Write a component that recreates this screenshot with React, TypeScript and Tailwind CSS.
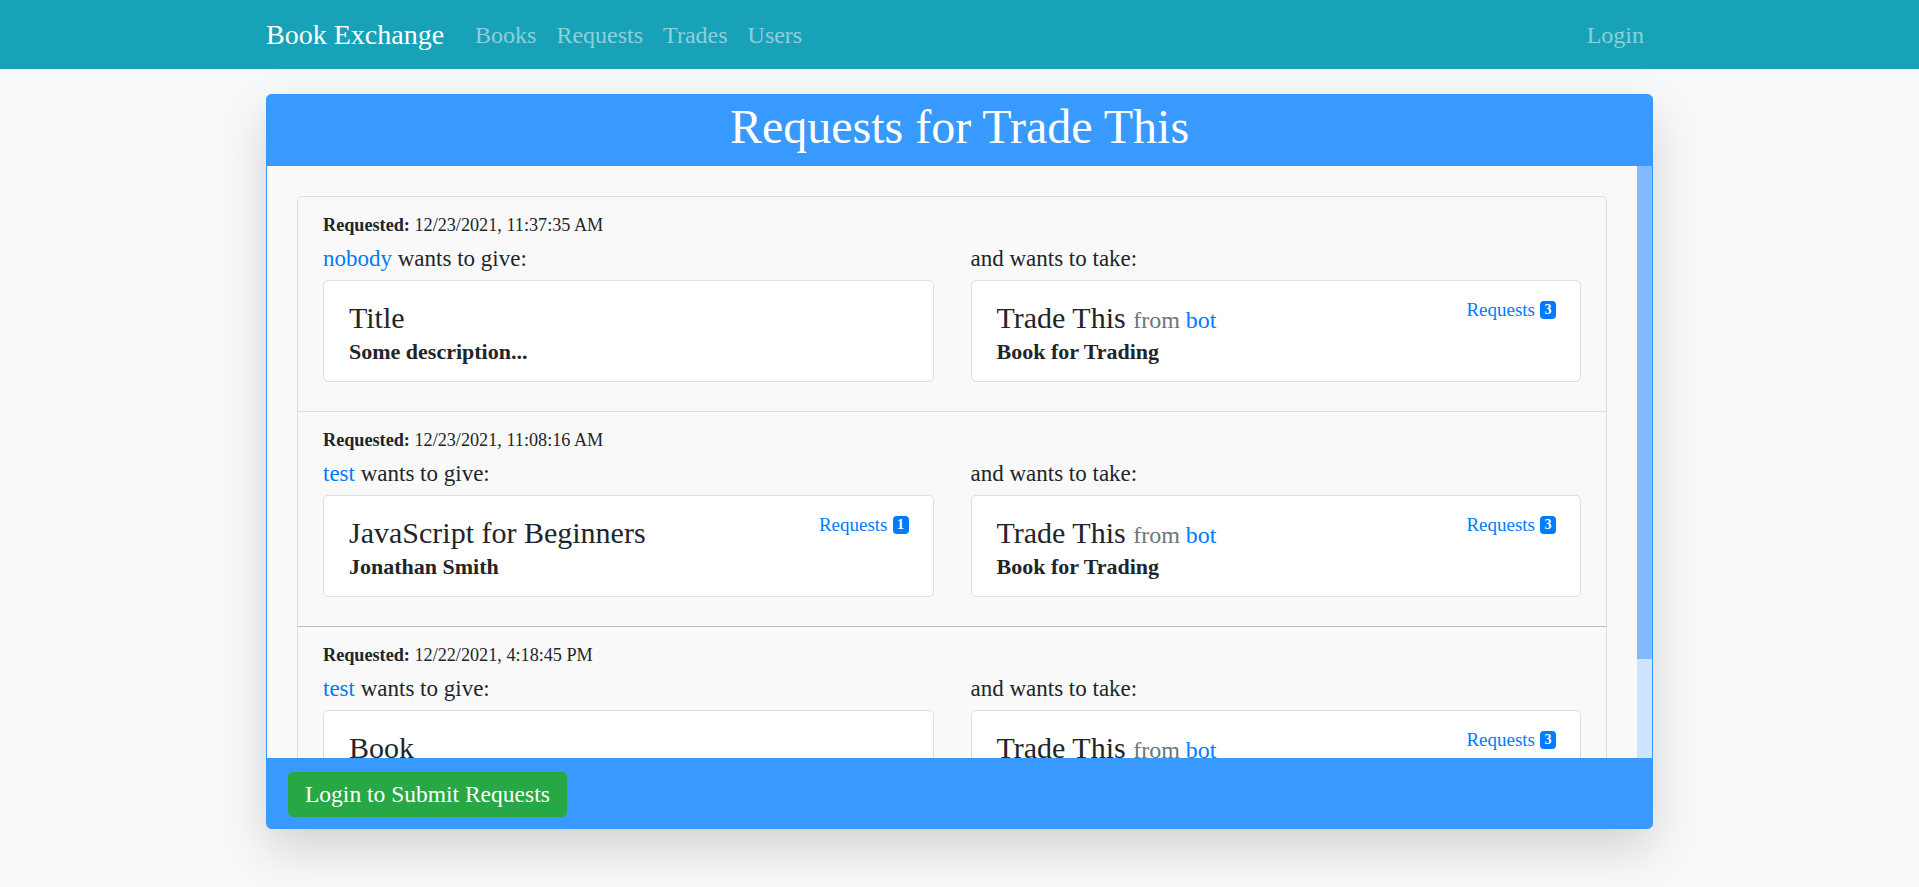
import React from "react";

type Book = {
  title: string;
  subtitle: string;
  from?: string;
  requests?: number;
};

type Req = {
  date: string;
  user: string;
  give: Book;
  take: Book;
  darkTop?: boolean;
};

const take: Book = { title: "Trade This", subtitle: "Book for Trading", from: "bot", requests: 3 };

const requests: Req[] = [
  {
    date: "12/23/2021, 11:37:35 AM",
    user: "nobody",
    give: { title: "Title", subtitle: "Some description..." },
    take,
  },
  {
    date: "12/23/2021, 11:08:16 AM",
    user: "test",
    give: { title: "JavaScript for Beginners", subtitle: "Jonathan Smith", requests: 1 },
    take,
  },
  {
    date: "12/22/2021, 4:18:45 PM",
    user: "test",
    give: { title: "Book", subtitle: "Unknown" },
    take,
    darkTop: true,
  },
];

function BookCard({ book }: { book: Book }) {
  return (
    <div className="relative h-[102px] rounded-[5px] border border-[#dfdfdf] bg-white pl-[25px] pr-[25px] pt-[20px] pb-[16px]">
      {book.requests !== undefined && (
        <div className="absolute right-[24px] top-[15px] flex items-center gap-[5px] text-[19px] leading-[28px] text-[#007bff]">
          <span>Requests</span>
          <span className="inline-flex h-[18px] min-w-[16px] items-center justify-center rounded-[4px] bg-[#007bff] px-[3px] text-[14px] font-bold leading-none text-white">
            {book.requests}
          </span>
        </div>
      )}
      <div className="h-[34px] text-[30px] leading-[34px] text-[#212529]">
        {book.title}
        {book.from && (
          <>
            {" "}
            <span className="text-[24px] leading-none text-[#6c757d]">
              from <span className="text-[#007bff]">{book.from}</span>
            </span>
          </>
        )}
      </div>
      <div className="mt-[4px] text-[22px] font-bold leading-[26px] text-[#212529]">{book.subtitle}</div>
    </div>
  );
}

function RequestItem({ r, first }: { r: Req; first: boolean }) {
  return (
    <div
      className={
        "px-[25px] pt-[15px] pb-[29px] " +
        (first ? "" : r.darkTop ? "border-t border-[#bdbdbd]" : "border-t border-[#dcdcdc]")
      }
    >
      <div className="text-[18.2px] leading-[27px] text-[#212529]">
        <b>Requested:</b> {r.date}
      </div>
      <div className="mt-[3px] grid grid-cols-2 gap-x-[37px]">
        <div>
          <div className="text-[23px] leading-[34px] text-[#212529]">
            <span className="text-[#007bff]">{r.user}</span> wants to give:
          </div>
          <div className="mt-[4px]">
            <BookCard book={r.give} />
          </div>
        </div>
        <div>
          <div className="text-[23px] leading-[34px] text-[#212529]">and wants to take:</div>
          <div className="mt-[4px]">
            <BookCard book={r.take} />
          </div>
        </div>
      </div>
    </div>
  );
}

export default function App() {
  return (
    <div
      className="min-h-screen bg-[#f8f9fa] text-[#212529]"
      style={{ fontFamily: '"Liberation Serif", "Times New Roman", serif' }}
    >
      <nav className="h-[69px] bg-[#17a2b8]">
        <div className="mx-auto flex h-full w-[1387px] items-center">
          <span className="mr-[21px] text-[28px] text-white">Book Exchange</span>
          <div className="flex items-center text-[24px] text-white/50">
            <span className="px-[10px]">Books</span>
            <span className="px-[10px]">Requests</span>
            <span className="px-[10px]">Trades</span>
            <span className="px-[10px]">Users</span>
          </div>
          <div className="ml-auto pr-[9px] text-[24px] text-white/50">Login</div>
        </div>
      </nav>

      <div className="mx-auto mt-[25px] w-[1387px] overflow-hidden rounded-[5px] border border-[#3898ff] shadow-[0_20px_50px_rgba(0,0,0,0.16)]">
        <div className="flex h-[71px] items-center justify-center bg-[#3899ff] pb-[8px] text-[48px] leading-none text-white">
          Requests for Trade This
        </div>
        <div className="flex h-[592px]">
          <div className="min-w-0 flex-1 overflow-hidden bg-[#f9f9f9] p-[30px]">
            <div className="rounded-[5px] border border-[#dcdcdc]">
              {requests.map((r, i) => (
                <RequestItem key={i} r={r} first={i === 0} />
              ))}
            </div>
          </div>
          <div className="w-[15px] shrink-0 bg-[#cde3fe]">
            <div className="h-[493px] w-full bg-[#80bbff]" />
          </div>
        </div>
        <div className="flex h-[70px] items-center bg-[#3899ff] pl-[21px] pt-[3px]">
          <button className="h-[45px] rounded-[5px] bg-[#28a745] px-[17px] text-[23.5px] text-white">
            Login to Submit Requests
          </button>
        </div>
      </div>
    </div>
  );
}
